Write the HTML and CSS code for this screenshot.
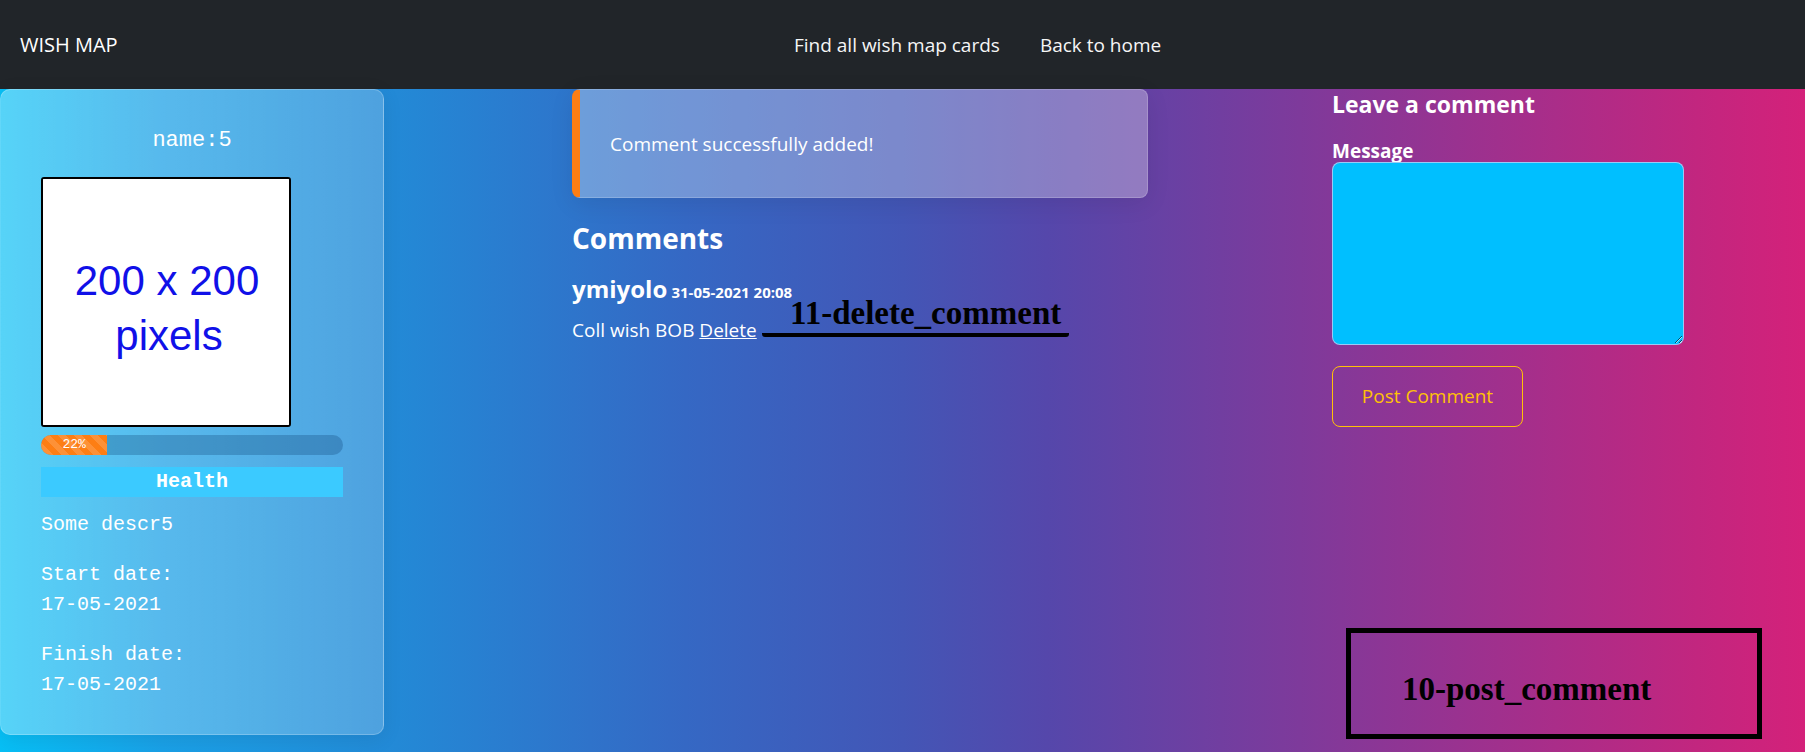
FILE: index.html
```html
<!DOCTYPE html>
<html lang="en">
<head>
<meta charset="utf-8">
<title>Wish map card</title>
<link rel="stylesheet" href="styles.css">
</head>
<body>
<nav class="navbar">
  <a class="brand" href="#">WISH MAP</a>
  <div class="nav-links">
    <a href="#">Find all wish map cards</a>
    <a href="#">Back to home</a>
  </div>
</nav>
<main class="page">
  <section class="card">
    <h2 class="card-name">name:5</h2>
    <div class="card-image">
      <svg width="246" height="246" viewBox="0 0 246 246" xmlns="http://www.w3.org/2000/svg">
        <rect width="246" height="246" fill="#ffffff"/>
        <text x="124" y="116" text-anchor="middle" font-family="Liberation Sans, Arial, sans-serif" font-size="42" fill="#1010e8">200 x 200</text>
        <text x="126" y="171" text-anchor="middle" font-family="Liberation Sans, Arial, sans-serif" font-size="42" fill="#1010e8">pixels</text>
      </svg>
    </div>
    <div class="progress">
      <div class="progress-bar" style="width: 22%">22%</div>
    </div>
    <div class="category">Health</div>
    <p class="card-text">Some descr5</p>
    <p class="card-text">Start date:<br>17-05-2021</p>
    <p class="card-text last">Finish date:<br>17-05-2021</p>
  </section>

  <section class="middle">
    <div class="alert">Comment successfully added!</div>
    <h3 class="comments-title">Comments</h3>
    <div class="comment">
      <div class="comment-head"><span class="author">ymiyolo</span> <span class="date">31-05-2021 20:08</span></div>
      <div class="comment-body">Coll wish BOB <a href="#" class="delete">Delete</a></div>
      <span class="note note-delete">11-delete_comment</span>
    </div>
  </section>

  <section class="right">
    <h4 class="leave-title">Leave a comment</h4>
    <form class="comment-form">
      <label class="msg-label" for="msg">Message</label>
      <textarea id="msg" class="msg-input"></textarea>
      <button type="button" class="post-btn">Post Comment</button>
    </form>
    <div class="note-box">10-post_comment</div>
  </section>
</main>
</body>
</html>
```

FILE: styles.css
```css
* { box-sizing: border-box; }

html, body {
  margin: 0;
  padding: 0;
}

body {
  min-height: 752px;
  font-family: "Open Sans", "Noto Sans", sans-serif;
  color: #ffffff;
  background: linear-gradient(to right, #07bff5 0%, #1aa0e6 9%, #2389d6 22%, #3568c4 38%, #4356b6 50%, #5547ab 58%, #7e3a9b 72%, #c2267f 94%, #d4217a 100%);
  overflow: hidden;
}

/* NAVBAR */
.navbar {
  height: 89px;
  background: #212529;
  display: flex;
  align-items: center;
  padding: 0 0 0 20px;
}

.brand {
  flex: 0 0 774px;
  color: #ffffff;
  text-decoration: none;
  font-size: 20px;
}

.nav-links {
  display: flex;
  gap: 40px;
}

.nav-links a {
  color: #f6f6f6;
  text-decoration: none;
  font-size: 19px;
}

/* PAGE LAYOUT */
.page {
  display: flex;
  align-items: flex-start;
}

/* LEFT CARD */
.card {
  flex: 0 0 384px;
  height: 646px;
  padding: 37px 40px 15px;
  border-radius: 10px;
  border: 1px solid rgba(255, 255, 255, 0.22);
  background: linear-gradient(to right, rgba(255, 255, 255, 0.32), rgba(255, 255, 255, 0.2));
  box-shadow: 0 4px 20px rgba(0, 0, 0, 0.08);
  font-family: "Liberation Mono", "Courier New", monospace;
}

.card-name {
  margin: 0 0 22px;
  text-align: center;
  font-weight: normal;
  font-size: 22px;
  line-height: 1.25;
}

.card-image {
  width: 250px;
  height: 250px;
  border: 2px solid #000000;
  border-radius: 3px;
  background: #ffffff;
  overflow: hidden;
}

.card-image svg { display: block; }

.progress {
  margin-top: 8px;
  height: 20px;
  border-radius: 10px;
  background: rgba(10, 60, 110, 0.28);
  overflow: hidden;
  display: flex;
}

.progress-bar {
  height: 100%;
  background-color: #fd7e14;
  background-image: linear-gradient(45deg, rgba(255,255,255,.15) 25%, transparent 25%, transparent 50%, rgba(255,255,255,.15) 50%, rgba(255,255,255,.15) 75%, transparent 75%, transparent);
  background-size: 16px 16px;
  color: #ffffff;
  font-family: "Liberation Mono", "Courier New", monospace;
  font-size: 13px;
  line-height: 20px;
  text-align: center;
}

.category {
  margin-top: 12px;
  height: 30px;
  background: #3bcaff;
  text-align: center;
  font-weight: bold;
  font-size: 20px;
  line-height: 30px;
}

.card-text {
  margin: 0 0 20px;
  font-size: 20px;
  line-height: 30px;
}

.card-text:first-of-type { margin-top: 13px; }

.card-text.last { margin-bottom: 0; }

/* MIDDLE */
.middle {
  flex: 0 0 576px;
  margin-left: 188px;
  position: relative;
}

.alert {
  height: 109px;
  display: flex;
  align-items: center;
  padding-left: 30px;
  border-radius: 8px;
  border: 1px solid rgba(255, 255, 255, 0.18);
  border-left: 8px solid #fd7e14;
  background: rgba(255, 255, 255, 0.3);
  box-shadow: 0 6px 24px rgba(0, 0, 0, 0.08);
  font-size: 19px;
}

.comments-title {
  margin: 22px 0 0;
  font-size: 28px;
  font-weight: bold;
  line-height: 1.3;
}

.comment {
  margin-top: 17px;
  position: relative;
}

.comment-head {
  line-height: 31px;
}

.author {
  font-size: 24px;
  font-weight: bold;
}

.date {
  font-size: 15px;
  font-weight: bold;
}

.comment-body {
  margin-top: 9px;
  font-size: 19px;
  line-height: 1.4;
}

.delete {
  color: #ffffff;
  text-decoration: underline;
}

.note {
  position: absolute;
  font-family: "Liberation Serif", "Times New Roman", serif;
  font-weight: bold;
  color: #000000;
}

.note-delete {
  left: 190px;
  top: 23px;
  width: 307px;
  padding: 0 0 3px 28px;
  font-size: 33px;
  line-height: 34px;
  border-bottom: 4px solid #000000;
  border-radius: 0 0 3px 3px;
}

/* RIGHT */
.right {
  flex: 1 1 auto;
  margin-left: 184px;
  position: relative;
  height: 663px;
}

.leave-title {
  margin: 2px 0 0;
  font-size: 23px;
  font-weight: bold;
  line-height: 1.2;
}

.comment-form {
  display: flex;
  flex-direction: column;
  align-items: flex-start;
}

.msg-label {
  margin-top: 22px;
  font-size: 19px;
  font-weight: bold;
  line-height: 21px;
}

.msg-input {
  width: 352px;
  height: 183px;
  margin: 0;
  border: 1px solid rgba(255, 210, 240, 0.6);
  border-radius: 8px;
  background: #00bfff;
  resize: both;
}

.post-btn {
  margin-top: 21px;
  width: 191px;
  height: 61px;
  border: 1px solid #ffc107;
  border-radius: 8px;
  background: transparent;
  color: #ffc107;
  font-family: "Open Sans", "Noto Sans", sans-serif;
  font-size: 19px;
  padding: 0;
}

.note-box {
  position: absolute;
  left: 14px;
  top: 539px;
  width: 416px;
  height: 111px;
  border: 5px solid #000000;
  padding: 12px 0 0 51px;
  display: flex;
  align-items: center;
  font-family: "Liberation Serif", "Times New Roman", serif;
  font-weight: bold;
  font-size: 33px;
  color: #000000;
}
```
